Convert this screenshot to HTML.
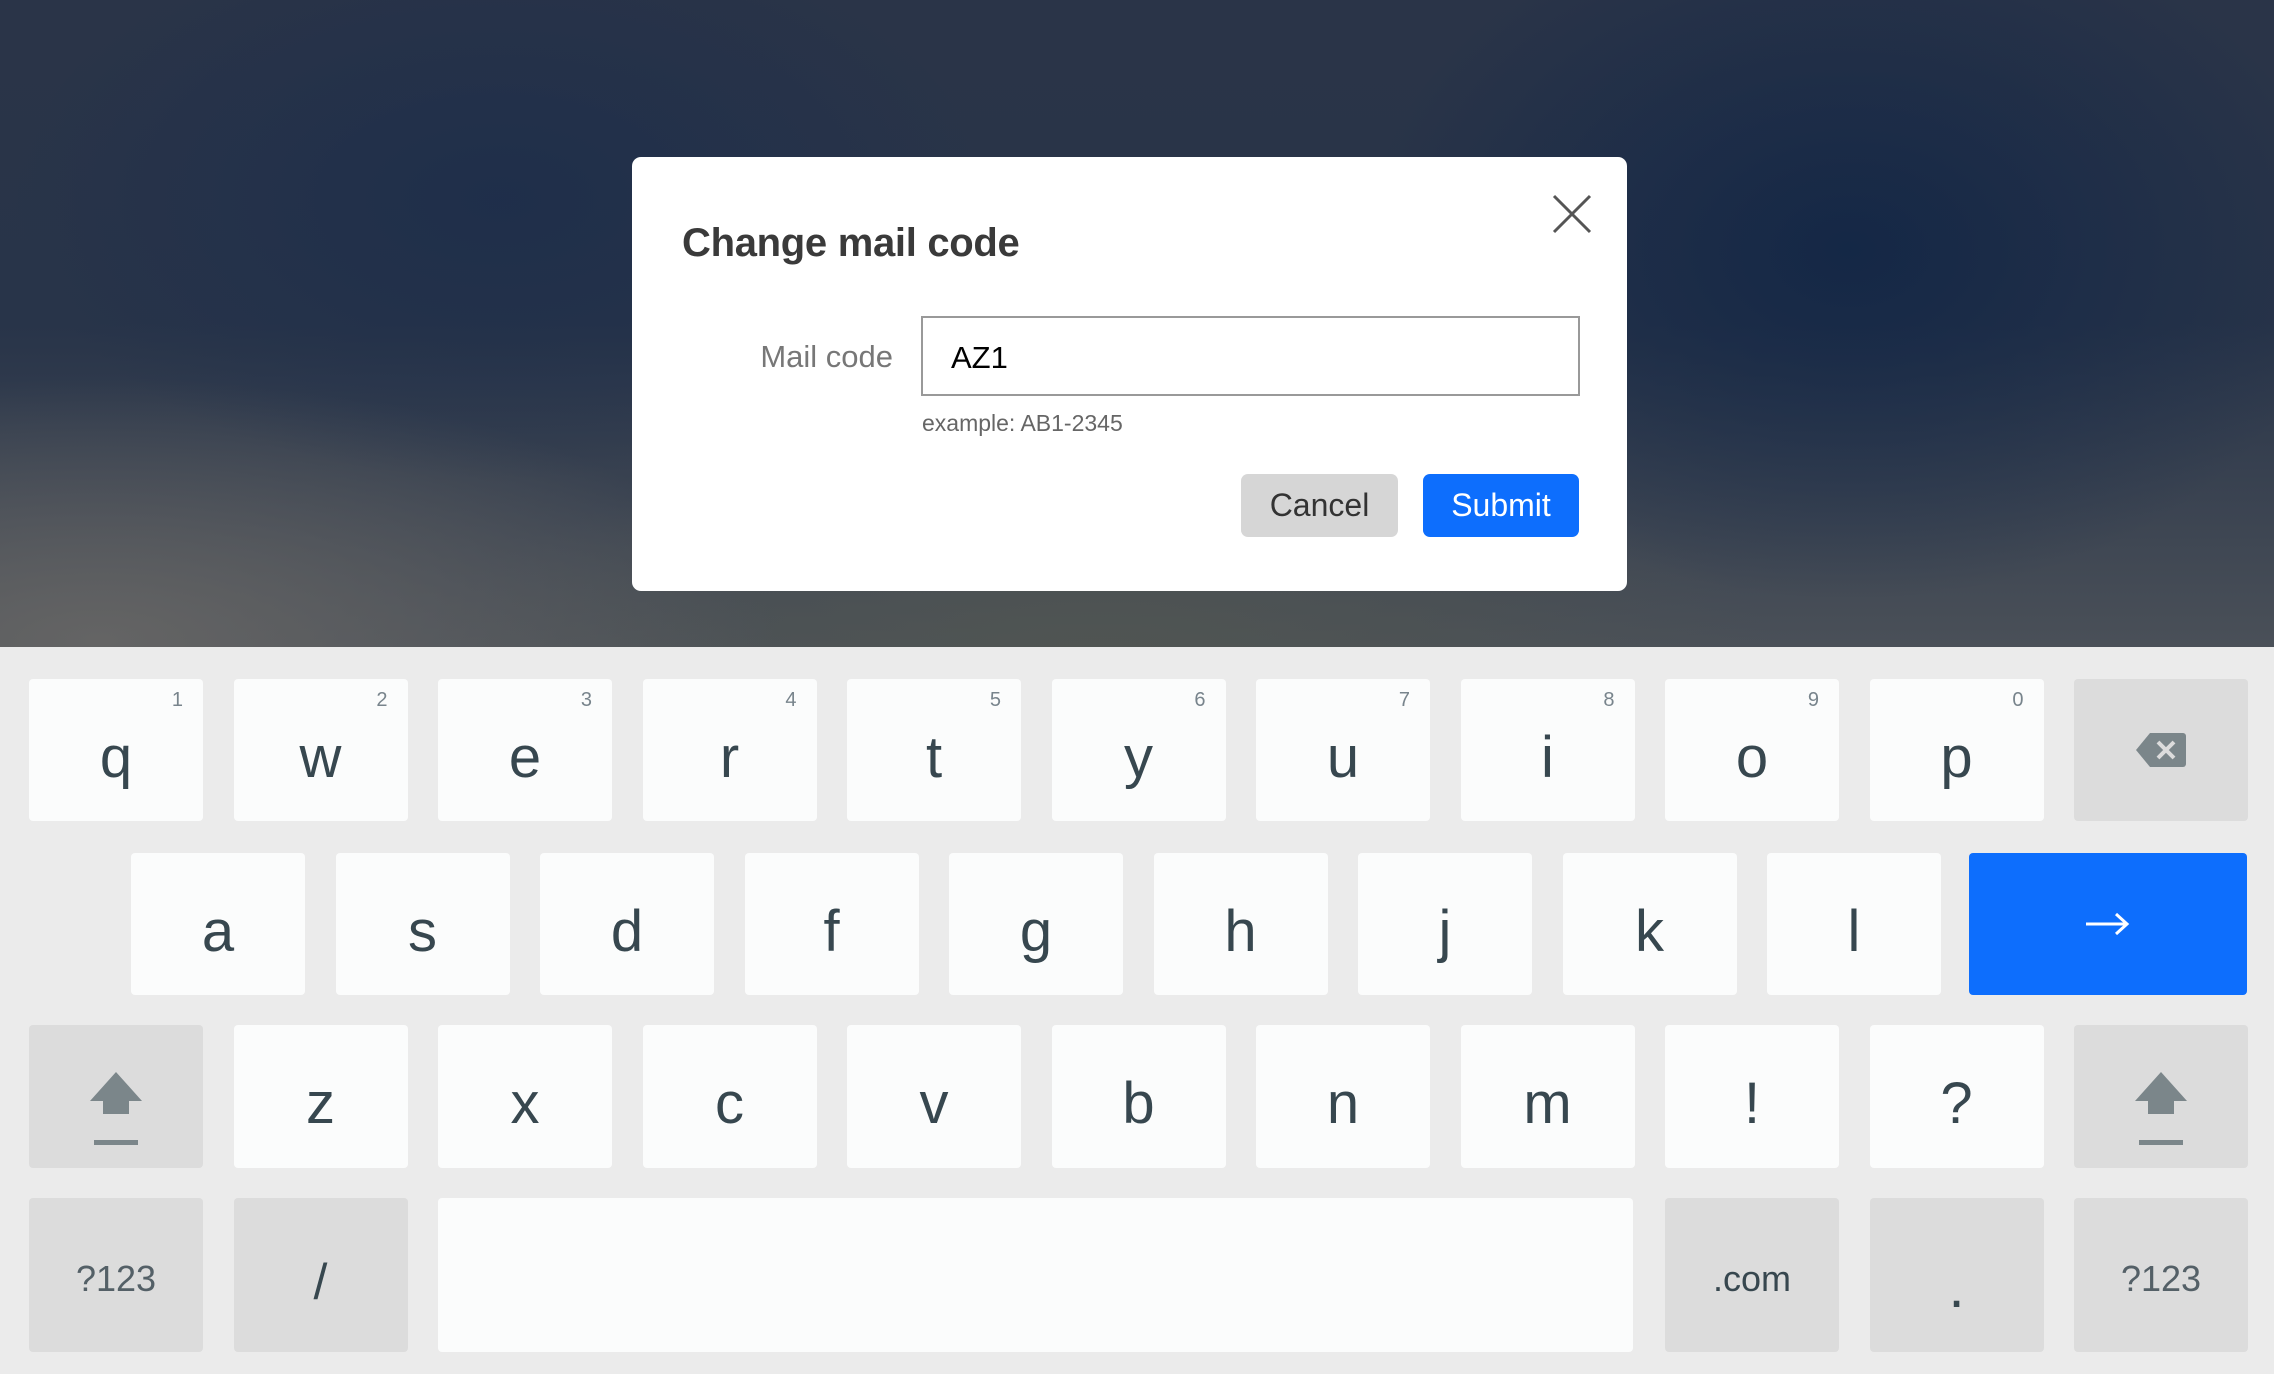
<!DOCTYPE html>
<html><head><meta charset="utf-8"><style>
html,body{margin:0;padding:0}
body{width:2274px;height:1374px;position:relative;overflow:hidden;font-family:"Liberation Sans",sans-serif;}
.bg{position:absolute;left:0;top:0;width:2274px;height:647px;
background:
radial-gradient(ellipse 700px 500px at 1850px 250px, rgba(18,38,70,0.9), rgba(18,38,70,0) 70%),
radial-gradient(ellipse 700px 400px at 500px 200px, rgba(28,45,75,0.8), rgba(28,45,75,0) 70%),
radial-gradient(ellipse 900px 350px at 100px 640px, rgba(100,100,100,1), rgba(100,100,100,0) 75%),
radial-gradient(ellipse 900px 300px at 1100px 660px, rgba(80,85,82,1), rgba(80,85,82,0) 75%),
linear-gradient(180deg,#2a3448 0%,#283449 50%,#4a5058 100%);}
.kb{position:absolute;left:0;top:647px;width:2274px;height:727px;background:#ebebeb}
.dlg{position:absolute;left:632px;top:157px;width:995px;height:434px;background:#fff;border-radius:9px}
.title{position:absolute;left:50px;top:64px;font-size:40px;color:#3a3a3a;font-weight:bold;letter-spacing:-0.3px}
.close{position:absolute;left:920px;top:37px}
.label{position:absolute;right:734px;top:182px;font-size:31px;color:#777}
.inp{position:absolute;left:289px;top:159px;width:659px;height:80px;border:2px solid #999;box-sizing:border-box}
.inp span{position:absolute;left:28px;top:22px;font-size:31px;color:#000}
.ex{position:absolute;left:290px;top:253px;font-size:23px;color:#666}
.btn{position:absolute;top:317px;height:63px;border-radius:7px;font-size:32px;display:flex;align-items:center;justify-content:center}
.k{position:absolute;width:174px;border-radius:4px;background:#fbfcfc;display:flex;align-items:center;justify-content:center;color:#37474f;font-size:58px;box-sizing:border-box;padding-top:14px}
.f{background:#dcdcdc}
.n{position:absolute;right:20px;top:10px;font-size:20px;color:#78848c}
.r1{top:679px;height:142px}.r2{top:853px;height:142px}.r3{top:1025px;height:143px}.r4{top:1198px;height:154px}
.sm{font-size:36px;color:#546067;padding-top:8px}
.sh{padding-top:26px}
</style></head><body>
<div class="bg"></div>
<div class="kb"></div>
<div class="dlg">
 <div class="title">Change mail code</div>
 <svg class="close" width="40" height="40" viewBox="0 0 40 40"><path d="M2 2L38 38M38 2L2 38" stroke="#555" stroke-width="3"/></svg>
 <div class="label">Mail code</div>
 <div class="inp"><span>AZ1</span></div>
 <div class="ex">example: AB1-2345</div>
 <div class="btn" style="left:609px;width:157px;background:#d6d6d6;color:#333">Cancel</div>
 <div class="btn" style="left:791px;width:156px;background:#0d6efd;color:#fff">Submit</div>
</div>

<div class="k r1" style="left:29px">q<span class="n">1</span></div>
<div class="k r1" style="left:233.5px">w<span class="n">2</span></div>
<div class="k r1" style="left:438px">e<span class="n">3</span></div>
<div class="k r1" style="left:642.5px">r<span class="n">4</span></div>
<div class="k r1" style="left:847px">t<span class="n">5</span></div>
<div class="k r1" style="left:1051.5px">y<span class="n">6</span></div>
<div class="k r1" style="left:1256px">u<span class="n">7</span></div>
<div class="k r1" style="left:1460.5px">i<span class="n">8</span></div>
<div class="k r1" style="left:1665px">o<span class="n">9</span></div>
<div class="k r1" style="left:1869.5px">p<span class="n">0</span></div>
<div class="k r1 f" style="left:2074px;padding-top:0"><svg width="50" height="34" viewBox="0 0 50 34"><path d="M0 17L14 0H47a3 3 0 0 1 3 3V31a3 3 0 0 1-3 3H14Z" fill="#7b868a"/><path d="M22 9L38 25M38 9L22 25" stroke="#dcdcdc" stroke-width="4"/></svg></div>

<div class="k r2" style="left:131px">a</div>
<div class="k r2" style="left:335.5px">s</div>
<div class="k r2" style="left:540px">d</div>
<div class="k r2" style="left:744.5px">f</div>
<div class="k r2" style="left:949px">g</div>
<div class="k r2" style="left:1153.5px">h</div>
<div class="k r2" style="left:1358px">j</div>
<div class="k r2" style="left:1562.5px">k</div>
<div class="k r2" style="left:1767px">l</div>
<div class="k r2" style="left:1969px;width:278px;background:#0d6efd;padding-top:0"><svg width="44" height="24" viewBox="0 0 44 24"><path d="M0 12H41M30 2L41 12L30 22" stroke="#fff" stroke-width="3" fill="none"/></svg></div>

<div class="k r3 f sh" style="left:29px"><svg width="56" height="76" viewBox="0 0 56 76"><path d="M28 0L54 29H41V42H15V29H2Z" fill="#7b868a"/><rect x="6" y="68" width="44" height="5" fill="#7b868a"/></svg></div>
<div class="k r3" style="left:233.5px">z</div>
<div class="k r3" style="left:438px">x</div>
<div class="k r3" style="left:642.5px">c</div>
<div class="k r3" style="left:847px">v</div>
<div class="k r3" style="left:1051.5px">b</div>
<div class="k r3" style="left:1256px">n</div>
<div class="k r3" style="left:1460.5px">m</div>
<div class="k r3" style="left:1665px">!</div>
<div class="k r3" style="left:1869.5px">?</div>
<div class="k r3 f sh" style="left:2074px"><svg width="56" height="76" viewBox="0 0 56 76"><path d="M28 0L54 29H41V42H15V29H2Z" fill="#7b868a"/><rect x="6" y="68" width="44" height="5" fill="#7b868a"/></svg></div>

<div class="k r4 f sm" style="left:29px">?123</div>
<div class="k r4 f" style="left:233.5px;font-size:50px">/</div>
<div class="k r4" style="left:438px;width:1195px"></div>
<div class="k r4 f sm" style="left:1665px;color:#37474f">.com</div>
<div class="k r4 f" style="left:1869.5px;font-size:58px;padding-top:24px">.</div>
<div class="k r4 f sm" style="left:2074px">?123</div>
</body></html>
